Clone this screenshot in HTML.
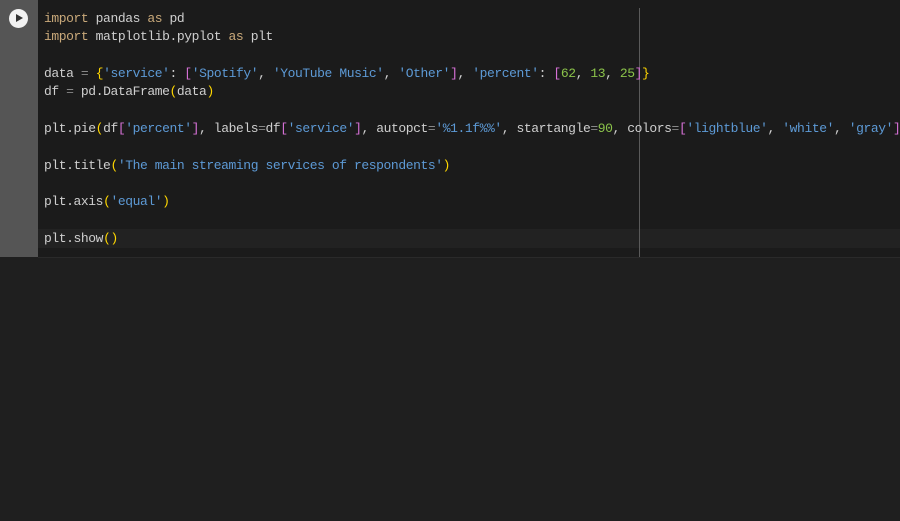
<!DOCTYPE html>
<html><head><style>
body{margin:0;width:900px;height:521px;background:#1f1f1f;overflow:hidden;position:relative}
.gut{position:absolute;left:0;top:0;width:38px;height:257px;background:#555}
.cell{position:absolute;left:38px;top:0;width:862px;height:257px;background:#1b1b1b;border-bottom:1px solid #2a2a2a}
.vl{position:absolute;left:639px;top:8px;width:1px;height:249px;background:#5a5a5a}
.hl{position:absolute;left:38px;top:229px;width:862px;height:19px;background:#222}
pre{position:absolute;left:44px;top:10px;margin:0;font:13px/18.33px "Liberation Mono",monospace;letter-spacing:-0.42px;color:#cfcfcf;white-space:pre}
.k{color:#c9a97a}.s{color:#5d9ad6}.n{color:#8bc34a}.y{color:#ffd700}.p{color:#d670d6}.o{color:#888}
.play{position:absolute;left:9px;top:9px;width:19px;height:19px;border-radius:50%;background:#f2f2f2}
.play:after{content:"";position:absolute;left:7px;top:5px;border-left:7px solid #333;border-top:4.5px solid transparent;border-bottom:4.5px solid transparent}
</style></head><body>
<div class="gut"></div><div class="cell"></div><div class="hl"></div><div class="vl"></div>
<div class="play"></div>
<pre><span class="k">import</span> pandas <span class="k">as</span> pd
<span class="k">import</span> matplotlib.pyplot <span class="k">as</span> plt

data <span class="o">=</span> <span class="y">{</span><span class="s">'service'</span>: <span class="p">[</span><span class="s">'Spotify'</span>, <span class="s">'YouTube Music'</span>, <span class="s">'Other'</span><span class="p">]</span>, <span class="s">'percent'</span>: <span class="p">[</span><span class="n">62</span>, <span class="n">13</span>, <span class="n">25</span><span class="p">]</span><span class="y">}</span>
df <span class="o">=</span> pd.DataFrame<span class="y">(</span>data<span class="y">)</span>

plt.pie<span class="y">(</span>df<span class="p">[</span><span class="s">'percent'</span><span class="p">]</span>, labels<span class="o">=</span>df<span class="p">[</span><span class="s">'service'</span><span class="p">]</span>, autopct<span class="o">=</span><span class="s">'%1.1f%%'</span>, startangle<span class="o">=</span><span class="n">90</span>, colors<span class="o">=</span><span class="p">[</span><span class="s">'lightblue'</span>, <span class="s">'white'</span>, <span class="s">'gray'</span><span class="p">]</span><span class="y">)</span>

plt.title<span class="y">(</span><span class="s">'The main streaming services of respondents'</span><span class="y">)</span>

plt.axis<span class="y">(</span><span class="s">'equal'</span><span class="y">)</span>

plt.show<span class="y">()</span></pre>
</body></html>
